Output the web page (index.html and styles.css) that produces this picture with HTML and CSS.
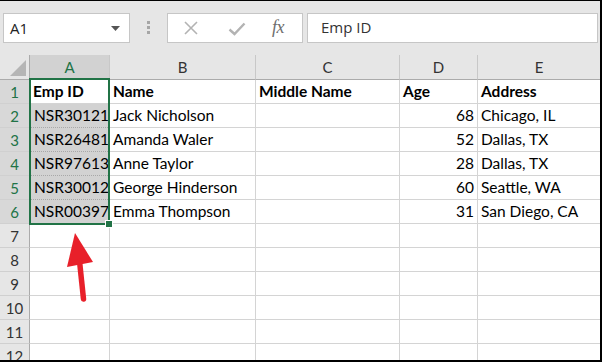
FILE: index.html
```html
<!DOCTYPE html>
<html>
<head>
<meta charset="utf-8">
<link rel="stylesheet" href="styles.css">
</head>
<body>
<div class="frame">
  <div class="toolbar">
    <div class="namebox">
      <span class="nb-text">A1</span>
      <svg class="nb-caret" width="9" height="5" viewBox="0 0 9 5"><path d="M0 0h9L4.5 5z" fill="#555"/></svg>
    </div>
    <div class="dots"><i></i><i></i><i></i></div>
    <div class="fbtns">
      <svg class="ic-x" width="16" height="16" viewBox="0 0 16 16"><path d="M2 2L14 14M14 2L2 14" stroke="#b3b3b3" stroke-width="1.6" fill="none"/></svg>
      <svg class="ic-check" width="18" height="14" viewBox="0 0 18 14"><path d="M1.5 7.5L6.5 12L16.5 1.5" stroke="#b3b3b3" stroke-width="2.4" fill="none"/></svg>
      <span class="fx">fx</span>
    </div>
    <div class="finput">Emp ID</div>
  </div>
  <div class="sheet">
    <div class="corner"><svg width="16" height="16" viewBox="0 0 16 16"><path d="M16 0V16H0z" fill="#b5b5b5"/></svg></div>
    <div class="ch selc">A</div>
    <div class="ch">B</div>
    <div class="ch">C</div>
    <div class="ch">D</div>
    <div class="ch last">E</div>

    <div class="rh selr">1</div>
    <div class="c b">Emp ID</div><div class="c b">Name</div><div class="c b">Middle Name</div><div class="c b">Age</div><div class="c b last">Address</div>

    <div class="rh selr">2</div>
    <div class="c s">NSR30121</div><div class="c">Jack Nicholson</div><div class="c"></div><div class="c n">68</div><div class="c last">Chicago, IL</div>

    <div class="rh selr">3</div>
    <div class="c s">NSR26481</div><div class="c">Amanda Waler</div><div class="c"></div><div class="c n">52</div><div class="c last">Dallas, TX</div>

    <div class="rh selr">4</div>
    <div class="c s">NSR97613</div><div class="c">Anne Taylor</div><div class="c"></div><div class="c n">28</div><div class="c last">Dallas, TX</div>

    <div class="rh selr">5</div>
    <div class="c s">NSR30012</div><div class="c">George Hinderson</div><div class="c"></div><div class="c n">60</div><div class="c last">Seattle, WA</div>

    <div class="rh selr">6</div>
    <div class="c s sl">NSR00397</div><div class="c">Emma Thompson</div><div class="c"></div><div class="c n">31</div><div class="c last">San Diego, CA</div>

    <div class="rh">7</div><div class="c"></div><div class="c"></div><div class="c"></div><div class="c"></div><div class="c last"></div>
    <div class="rh">8</div><div class="c"></div><div class="c"></div><div class="c"></div><div class="c"></div><div class="c last"></div>
    <div class="rh">9</div><div class="c"></div><div class="c"></div><div class="c"></div><div class="c"></div><div class="c last"></div>
    <div class="rh">10</div><div class="c"></div><div class="c"></div><div class="c"></div><div class="c"></div><div class="c last"></div>
    <div class="rh">11</div><div class="c"></div><div class="c"></div><div class="c"></div><div class="c"></div><div class="c last"></div>
    <div class="rh">12</div><div class="c"></div><div class="c"></div><div class="c"></div><div class="c"></div><div class="c last"></div>

    <div class="sel"><span class="handle"></span></div>
    <svg class="arrow" width="40" height="80" viewBox="0 0 40 80"><path d="M15 0L7 34L33 29z" fill="#e8202a"/><path d="M19.5 28L23.5 66" stroke="#e8202a" stroke-width="5.5" stroke-linecap="round" fill="none"/></svg>
  </div>
</div>
</body>
</html>
```
FILE: styles.css
```css
html, body { margin: 0; padding: 0; }
body { width: 602px; height: 362px; overflow: hidden; background: #fff; }
.frame {
  width: 602px; height: 362px; box-sizing: border-box;
  border-top: 1px solid #000; border-right: 2px solid #000; border-bottom: 2px solid #000;
  background: #e6e6e6; overflow: hidden;
}
.toolbar {
  height: 54px; box-sizing: border-box; padding: 12px 2px 0 3px;
  display: flex; align-items: flex-start;
  font-family: "Segoe UI", "Open Sans", "Noto Sans", sans-serif;
}
.namebox {
  width: 127px; height: 30px; box-sizing: border-box; background: #fff;
  border: 1px solid #c6c6c6; display: flex; align-items: center;
  padding: 0 9px 0 6px; justify-content: space-between;
}
.nb-text { font-size: 15px; color: #222; }
.nb-caret { margin-top: 1px; }
.dots { width: 37px; display: flex; flex-direction: column; align-items: center; gap: 2px; padding-top: 8px; }
.dots i { display: block; width: 3px; height: 3px; background: #a6a6a6; }
.fbtns {
  width: 136px; height: 30px; box-sizing: border-box; background: #fff;
  border: 1px solid #c6c6c6; display: flex; align-items: center;
  padding-left: 15px;
}
.ic-x { margin-right: 29px; }
.ic-check { margin-right: 26px; margin-top: 2px; }
.fx { font-family: "Liberation Serif", "DejaVu Serif", serif; font-style: italic; font-size: 18px; color: #6e6e6e; margin-top: -2px; letter-spacing: -0.5px; }
.finput {
  margin-left: 4px; flex: 1; height: 30px; box-sizing: border-box; background: #fff;
  border: 1px solid #c6c6c6; padding-left: 13px; font-size: 15px; color: #333;
  line-height: 27px;
}
.sheet {
  position: relative;
  display: grid;
  grid-template-columns: 30px 80px 146px 144px 78px 1fr;
  grid-template-rows: 25px repeat(12, 24px);
  background: #fff;
  font-family: Lato, "Open Sans", sans-serif;
  font-size: 15.5px;
}
.corner {
  background: #e6e6e6; border-right: 1px solid #ababab; border-bottom: 1px solid #ababab;
  box-sizing: border-box; display: flex; align-items: flex-end; justify-content: flex-end;
  padding: 0 3px 3px 0;
}
.ch {
  background: #e6e6e6; box-sizing: border-box;
  border-right: 1px solid #c8c8c8; border-bottom: 1px solid #ababab;
  text-align: center; line-height: 24px; color: #333; font-size: 15px;
}
.ch.selc { background: #d2d2d2; color: #217346; }
.ch.last { border-right: none; }
.rh {
  background: #e6e6e6; box-sizing: border-box;
  border-right: 1px solid #ababab; border-bottom: 1px solid #d0d0d0;
  text-align: center; line-height: 25px; color: #333; font-size: 15px;
}
.rh.selr { background: #d8d8d8; color: #217346; }
.c {
  box-sizing: border-box; border-right: 1px solid #d4d4d4; border-bottom: 1px solid #d4d4d4;
  padding: 0 3px; line-height: 23px; color: #000; white-space: nowrap; overflow: visible;
}
.c.last { border-right: none; }
.c.b { font-weight: bold; }
.c.n { text-align: right; }
.c.s { background: #d2d2d2; border-bottom: 1px dotted #a8a8a8; padding-left: 4px; }
.c.s.sl { border-bottom-color: #d4d4d4; }
.sel {
  position: absolute;
  grid-column: 2 / 3; grid-row: 2 / 8;
  top: -2px; bottom: -1px; left: -1px; right: 0;
  border: 2px solid #217346; box-sizing: border-box;
  pointer-events: none;
}
.handle {
  position: absolute; right: -5px; bottom: -5px; width: 6px; height: 6px;
  background: #217346; border: 1px solid #fff;
}
.arrow { position: absolute; left: 60px; top: 178px; }
```
